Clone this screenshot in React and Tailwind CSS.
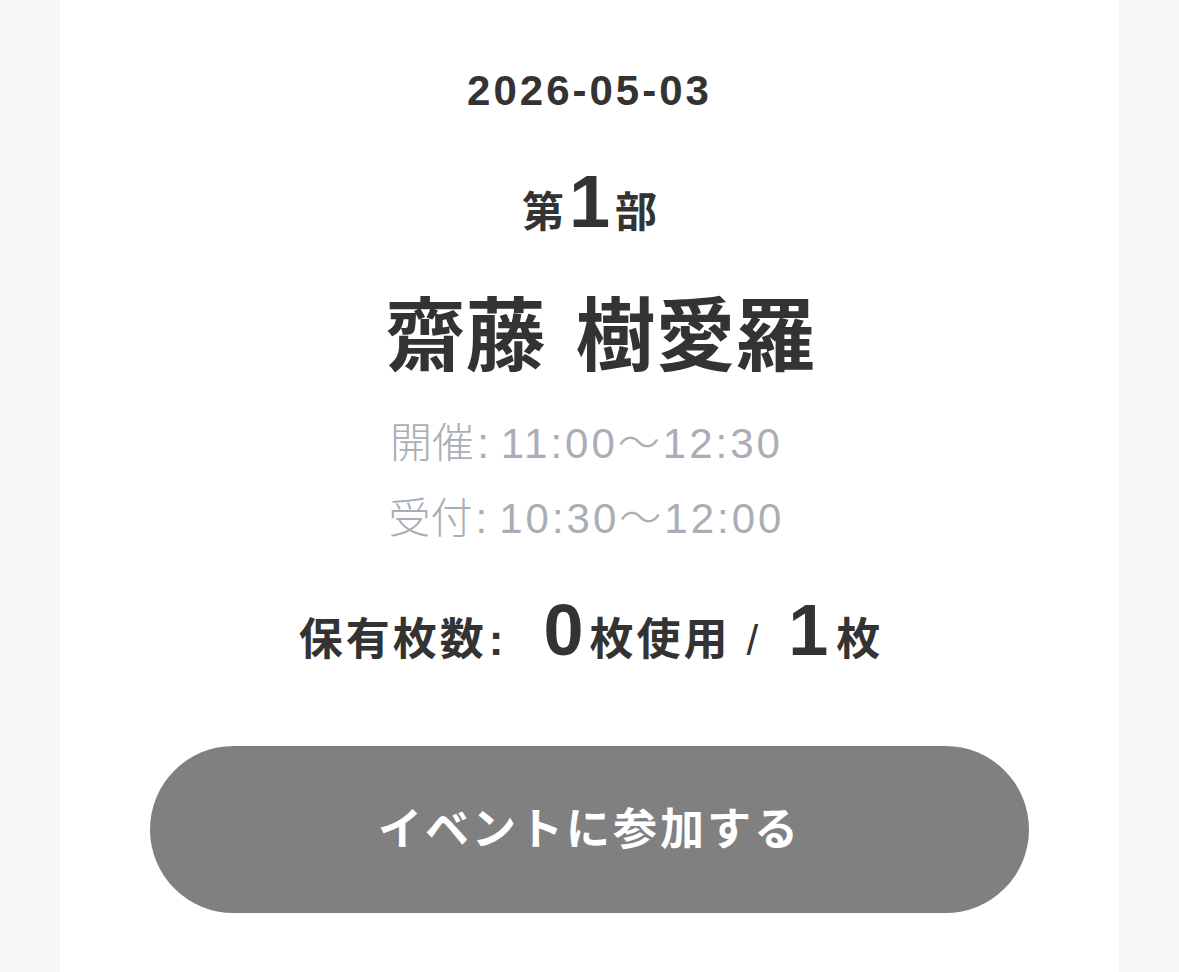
const TicketCard = () => {
  return (
    <div className="flex min-h-screen flex-col items-center bg-white px-[90px] text-[#333333]">
      <p className="mt-[70px] text-[42px] font-bold leading-none tracking-[3px]">2026-05-03</p>

      <div className="mt-[53px] flex items-baseline leading-none">
        <span className="text-[42px] font-bold">第</span>
        <span className="mx-[5px] text-[74px] font-bold">1</span>
        <span className="text-[42px] font-bold">部</span>
      </div>

      <h1 className="mt-[58px] flex text-[80px] font-bold leading-none">
        <span className="ml-[22px]">齋藤</span>
        <span className="ml-[30px]">樹愛羅</span>
      </h1>

      <div className="mt-[46px] flex flex-col items-center gap-[33px] text-[42px] font-light leading-none text-[#a9aeb6]">
        <p className="mr-[6px] flex items-baseline">
          <span>開催</span>
          <span className="ml-[3px] mr-[12px]">:</span>
          <span className="tracking-[3px]">11:00～12:30</span>
        </p>
        <p className="mr-[6px] flex items-baseline">
          <span>受付</span>
          <span className="ml-[3px] mr-[12px]">:</span>
          <span className="tracking-[3px]">10:30～12:00</span>
        </p>
      </div>

      <div className="mt-[54px] flex items-baseline font-bold leading-none">
        <span className="text-[44px] tracking-[3px]">保有枚数</span>
        <span className="ml-[2px] text-[44px]">:</span>
        <span className="ml-[40px] text-[72px]">0</span>
        <span className="ml-[6px] text-[44px] tracking-[3px]">枚使用</span>
        <span className="ml-[16px] text-[42px] font-normal">/</span>
        <span className="ml-[30px] text-[72px]">1</span>
        <span className="ml-[8px] text-[44px]">枚</span>
      </div>

      <button
        type="button"
        className="mt-[80px] flex h-[167px] w-full items-center justify-center rounded-full bg-[#808080] text-[44px] font-bold tracking-[3px] text-white"
      >
        イベントに参加する
      </button>
    </div>
  );
};

export default function App() {
  return (
    <div
      className="flex min-h-screen justify-center bg-[#f7f7f7] px-[60px]"
      style={{ fontFamily: '"Liberation Sans", "Noto Sans CJK JP", sans-serif' }}
    >
      <div className="w-full">
        <TicketCard />
      </div>
    </div>
  );
}
